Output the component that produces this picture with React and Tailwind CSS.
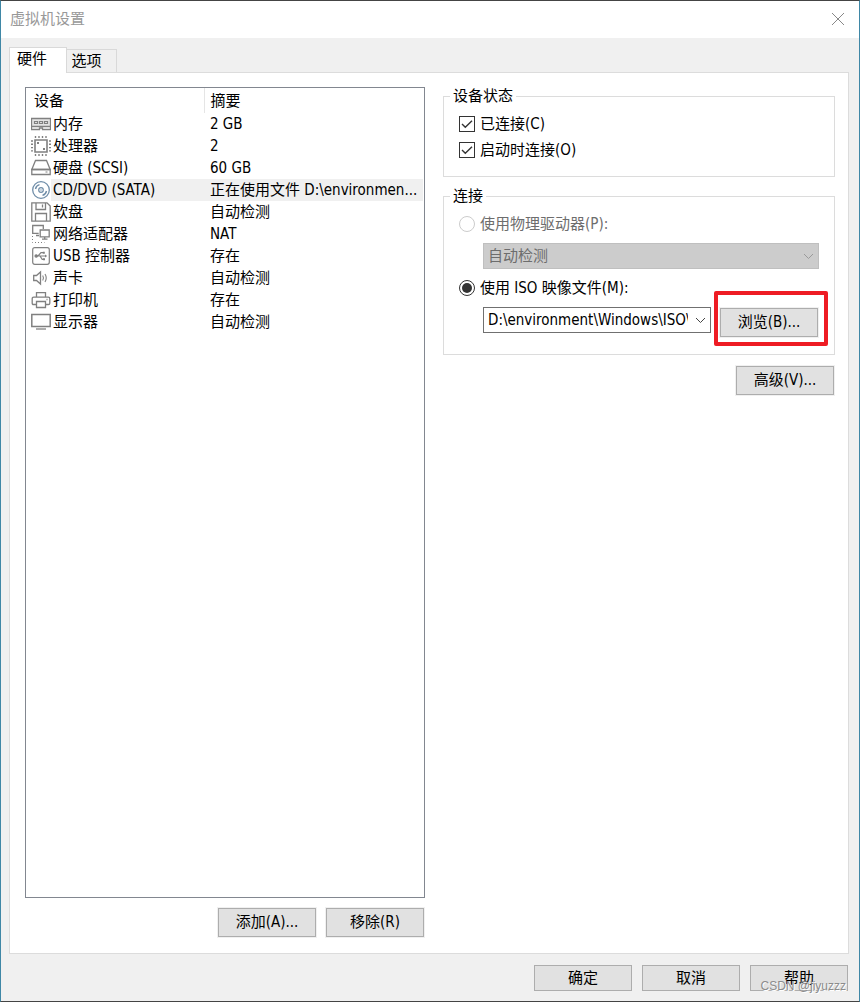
import { clsx } from "clsx";

function MemoryIcon() {
  return (
    <svg className="size-5" viewBox="0 0 20 20" fill="none" stroke="#808080">
      <path d="M.5 4.500h19v8H.5z" fill="#e4e4e4" strokeWidth="1.3" />
      <path d="M3.500 7.500h3v2h-3zM8.500 7.500h3v2h-3zM13.500 7.500h3v2h-3z" strokeWidth="1.2" />
      <path d="M.5 12.500v3h8v-1.500h3v1.500h8v-3" strokeWidth="1.3" />
    </svg>
  );
}

function CpuIcon() {
  return (
    <svg className="size-5" viewBox="0 0 20 20" fill="none" stroke="#808080">
      <path d="M4 4h12v12H4z" strokeWidth="1.6" />
      <path d="M4.500 0v2m3.500-2v2m3.500-2v2m3.500-2v2M4.500 18v2m3.500-2v2m3.500-2v2m3.500-2v2M0 5h2m-2 3.300h2m-2 3.300h2m-2 3.300h2M18 5h2m-2 3.300h2m-2 3.300h2m-2 3.300h2" strokeWidth="1.4" />
      <path d="M6 6h2v2H6zM12 12h2v2h-2z" fill="#808080" stroke="none" />
    </svg>
  );
}

function DiskIcon() {
  return (
    <svg className="size-5" viewBox="0 0 20 20" fill="none" stroke="#808080" strokeWidth="1.3">
      <path d="M4.500 2.500h11l3.700 9H.8z" />
      <path d="M.8 11.500h18.400v5H.8z" />
      <path d="M14.500 14h2" strokeWidth="1" />
    </svg>
  );
}

function DiscIcon() {
  return (
    <svg className="size-5" viewBox="0 0 20 20" fill="none" stroke="#6f8da8">
      <circle cx="10" cy="10" r="8.300" strokeWidth="1.3" />
      <circle cx="10" cy="10" r="2.300" strokeWidth="1.2" />
      <circle cx="10" cy="10" r=".7" fill="#6f8da8" stroke="none" />
      <path d="M4.500 9A5.600 5.600 0 0 1 8.500 4.700M15.500 11a5.600 5.600 0 0 1-4 4.300" strokeWidth="1.4" />
    </svg>
  );
}

function FloppyIcon() {
  return (
    <svg className="size-5" viewBox="0 0 20 20" fill="none" stroke="#808080" strokeWidth="1.3">
      <path d="M.8.8H16l3.200 3.200v15.200H.8z" />
      <path d="M5 1v6.500h9.500V1M11.500 2.500v3" />
      <path d="M4.500 19v-7.500h11V19" />
    </svg>
  );
}

function NetworkIcon() {
  return (
    <svg className="size-5" viewBox="0 0 20 20" fill="none" stroke="#808080" strokeWidth="1.3">
      <path d="M12.300 5V1.500H1.700v7.800h6M5 11.500h3" />
      <path d="M9.200 6h9v6.800h-9zM11 15.200h5.500M13.700 13v2" />
      <path d="M1.500 12v6.500h12" strokeWidth="1" strokeDasharray="1 2" />
    </svg>
  );
}

function UsbIcon() {
  return (
    <svg className="size-5" viewBox="0 0 20 20" fill="none" stroke="#808080" strokeWidth="1.2">
      <rect x="1.700" y="1.700" width="16.600" height="16.600" rx="2" />
      <path d="M5 10h10M7 10l3-3.300h2M9 10l2.200 3.300h1.300" />
      <circle cx="5.200" cy="10" r="1.200" fill="#808080" />
      <path d="M11.800 5.700h2v2h-2zM12 12.300h2v2h-2zM14 8.400l2.200 1.600-2.200 1.600z" fill="#808080" stroke="none" />
    </svg>
  );
}

function SoundIcon() {
  return (
    <svg className="size-5" viewBox="0 0 20 20" fill="none" stroke="#808080" strokeWidth="1.3">
      <path d="M2.700 7.500h2.800l4-3.600v12.200l-4-3.600H2.700z" />
      <path d="M11.700 7.500c1 1.600 1 3.400 0 5M14 6c1.600 2.600 1.600 5.400 0 8" strokeWidth="1.1" />
    </svg>
  );
}

function PrinterIcon() {
  return (
    <svg className="size-5" viewBox="0 0 20 20" fill="none" stroke="#808080" strokeWidth="1.3">
      <path d="M5.500 7V2.700h9V7" />
      <path d="M5 14.500H2.500c-.9 0-1.300-.4-1.300-1.300V8.700c0-1 .5-1.500 1.500-1.500h14.600c1 0 1.500.5 1.500 1.500v4.500c0 .9-.4 1.300-1.300 1.300H15" />
      <path d="M5.500 11.500h9v6h-9zM15.500 9.500h1" />
    </svg>
  );
}

function DisplayIcon() {
  return (
    <svg className="size-5" viewBox="0 0 20 20" fill="none" stroke="#808080" strokeWidth="1.5">
      <path d="M.8 2.500h18.400v12H.8z" />
      <path d="M5 17h10" strokeWidth="1.3" />
    </svg>
  );
}

const devices = [
  { name: "内存", summary: "2 GB", Icon: MemoryIcon },
  { name: "处理器", summary: "2", Icon: CpuIcon },
  { name: "硬盘 (SCSI)", summary: "60 GB", Icon: DiskIcon },
  { name: "CD/DVD (SATA)", summary: "正在使用文件 D:\\environmen...", Icon: DiscIcon, selected: true },
  { name: "软盘", summary: "自动检测", Icon: FloppyIcon },
  { name: "网络适配器", summary: "NAT", Icon: NetworkIcon },
  { name: "USB 控制器", summary: "存在", Icon: UsbIcon },
  { name: "声卡", summary: "自动检测", Icon: SoundIcon },
  { name: "打印机", summary: "存在", Icon: PrinterIcon },
  { name: "显示器", summary: "自动检测", Icon: DisplayIcon },
];

function Button({ children, className }) {
  return (
    <button
      type="button"
      className={clsx("w-[98px] shrink-0 border border-[#adadad] bg-[#e1e1e1] text-center hover:border-[#0078d7] hover:bg-[#e5f1fb]", className)}
    >
      {children}
    </button>
  );
}

function Checkbox({ id, label }) {
  return (
    <div className="flex h-6 items-center gap-[5px]">
      <span className="relative size-4">
        <input id={id} type="checkbox" defaultChecked className="peer block size-4 appearance-none border border-[#333] bg-white" />
        <svg className="pointer-events-none absolute inset-0 hidden size-4 peer-checked:block" viewBox="0 0 16 16" fill="none" stroke="#333" strokeWidth="1.4">
          <path d="M3 8l3.300 3.300L13 4.700" />
        </svg>
      </span>
      <label htmlFor={id}>{label}</label>
    </div>
  );
}

function Radio({ id, label, ...props }) {
  return (
    <div className="flex h-6 items-center gap-[5px]">
      <span className="relative size-4">
        <input
          id={id}
          type="radio"
          name="connection"
          className="peer block size-4 appearance-none rounded-full border border-[#333] bg-white disabled:border-[#ccc]"
          {...props}
        />
        <span className="pointer-events-none absolute inset-[3px] hidden rounded-full bg-[#333] peer-checked:block" />
      </span>
      <label htmlFor={id} className={clsx(props.disabled && "text-[#6d6d6d]")}>
        {label}
      </label>
    </div>
  );
}

function Select({ label, value, disabled, className }) {
  return (
    <div className={clsx("relative h-[26px]", className)}>
      <select
        aria-label={label}
        disabled={disabled}
        className="block h-full w-full appearance-none overflow-hidden border border-[#707070] bg-white pr-[22px] pb-px pl-1 text-clip opacity-100 disabled:border-[#bfbfbf] disabled:bg-[#ccc] disabled:text-[#6d6d6d]"
      >
        <option>{value}</option>
      </select>
      <svg
        className={clsx("pointer-events-none absolute top-2 right-[5px] h-[10px] w-[11px]", disabled ? "text-[#9a9a9a]" : "text-[#444]")}
        viewBox="0 0 11 10"
        fill="none"
        stroke="currentColor"
      >
        <path d="M1 3l4.500 4.500L10 3" />
      </svg>
    </div>
  );
}

function Group({ title, className, children }) {
  return (
    <fieldset className={clsx("min-w-0 border border-[#dcdcdc] px-[15px]", className)}>
      <legend className="-ml-[9px] px-[3px] leading-[21px]">{title}</legend>
      {children}
    </fieldset>
  );
}

function DeviceList() {
  return (
    <div className="mt-px flex-1 border border-[#828790] bg-white">
      <table className="w-full table-fixed border-collapse text-left">
        <thead>
          <tr className="h-[25px]">
            <th className="w-[178px] border-r border-[#e5e5e5] py-0 pl-2 font-normal">设备</th>
            <th className="py-0 pl-[6px] font-normal">摘要</th>
          </tr>
        </thead>
        <tbody>
          {devices.map(({ name, summary, Icon, selected }) => (
            <tr key={name} className="h-[22px]">
              <td className="p-0 pl-[5px]">
                <div className="flex h-[22px] items-center">
                  <Icon />
                  <span className={clsx("flex-1 pl-[2px] leading-[22px]", selected && "bg-[#f0f0f0]")}>{name}</span>
                </div>
              </td>
              <td className="p-0 pr-px">
                <div className={clsx("truncate pl-[6px] leading-[22px]", selected && "bg-[#f0f0f0]")}>{summary}</div>
              </td>
            </tr>
          ))}
        </tbody>
      </table>
    </div>
  );
}

export default function App() {
  return (
    <div className="relative flex min-h-screen flex-col border border-[#444] border-x-[#3f87a6] bg-[#f0f0f0] font-['DejaVu_Sans_Condensed','Noto_Sans_CJK_SC',sans-serif] text-[15px] leading-5 text-black">
      <header className="flex h-[37px] items-center justify-between bg-white pr-[14px] pb-px pl-[9px]">
        <h1 className="text-[#999]">虚拟机设置</h1>
        <button type="button" aria-label="关闭">
          <svg className="size-[14px]" viewBox="0 0 14 14" fill="none" stroke="#888">
            <path d="M1 1l12 12M13 1L1 13" />
          </svg>
        </button>
      </header>

      <main className="mx-2 mt-[9px] mb-[11px] flex flex-1 flex-col pr-[2px]">
        <div role="tablist" className="flex items-end">
          <button type="button" role="tab" aria-selected="true" className="relative z-10 -mb-px h-[26px] w-[58px] border border-b-0 border-[#d9d9d9] bg-white pr-3 pb-1">
            硬件
          </button>
          <button type="button" role="tab" aria-selected="false" className="-mb-px h-6 w-[50px] border border-b-0 border-l-0 border-[#d9d9d9] pr-[10px] pb-px">
            选项
          </button>
        </div>

        <div className="grid flex-1 grid-cols-[400fr_392fr] gap-[18px] border border-[#dcdcdc] bg-white pt-[13px] pr-[13px] pb-4 pl-[15px]">
          <section className="flex min-w-0 flex-col">
            <DeviceList />
            <div className="mt-[10px] mr-px flex justify-end gap-[10px]">
              <Button className="h-[29px] pb-[2px] ring-1 ring-[#f0f0f0]">添加(A)...</Button>
              <Button className="h-[29px] pb-[2px] ring-1 ring-[#f0f0f0]">移除(R)</Button>
            </div>
          </section>

          <section className="min-w-0">
            <Group title="设备状态" className="pt-[5px] pb-[14px]">
              <Checkbox id="connected" label="已连接(C)" />
              <div className="mt-[2px]">
                <Checkbox id="connect-on-start" label="启动时连接(O)" />
              </div>
            </Group>

            <Group title="连接" className="mt-[9px] pt-[5px] pb-[17px]">
              <Radio id="physical" label="使用物理驱动器(P):" disabled />
              <Select label="物理驱动器" value="自动检测" disabled className="my-[7px] ml-6" />
              <Radio id="iso" label="使用 ISO 映像文件(M):" defaultChecked />
              <div className="mt-[7px] ml-6 flex gap-[9px]">
                <Select label="ISO 映像文件" value="D:\environment\Windows\ISO\" className="min-w-0 flex-1" />
                <span className="relative mt-px mr-px flex">
                  <Button className="h-[29px] pb-[2px] ring-1 ring-[#f0f0f0]">浏览(B)...</Button>
                  <span className="pointer-events-none absolute -top-[17px] -right-[10px] -bottom-[9px] -left-[6px] rounded-xs border-4 border-[#ee1c24]" />
                </span>
              </div>
            </Group>

            <div className="mt-[11px] mr-px flex justify-end">
              <Button className="h-[29px] pb-[2px] ring-1 ring-[#f0f0f0]">高级(V)...</Button>
            </div>
          </section>
        </div>
      </main>

      <footer className="mr-[11px] mb-[10px] flex justify-end gap-[10px]">
        <Button className="h-[26px]">确定</Button>
        <Button className="h-[26px]">取消</Button>
        <Button className="h-[26px]">帮助</Button>
      </footer>

      <span className="pointer-events-none absolute right-[13px] bottom-[7px] font-['Liberation_Sans',Arial,sans-serif] text-xs text-[#8c8c8c] [text-shadow:1px_1px_0_#fff]">
        CSDN @jiyuzzz
      </span>
    </div>
  );
}
